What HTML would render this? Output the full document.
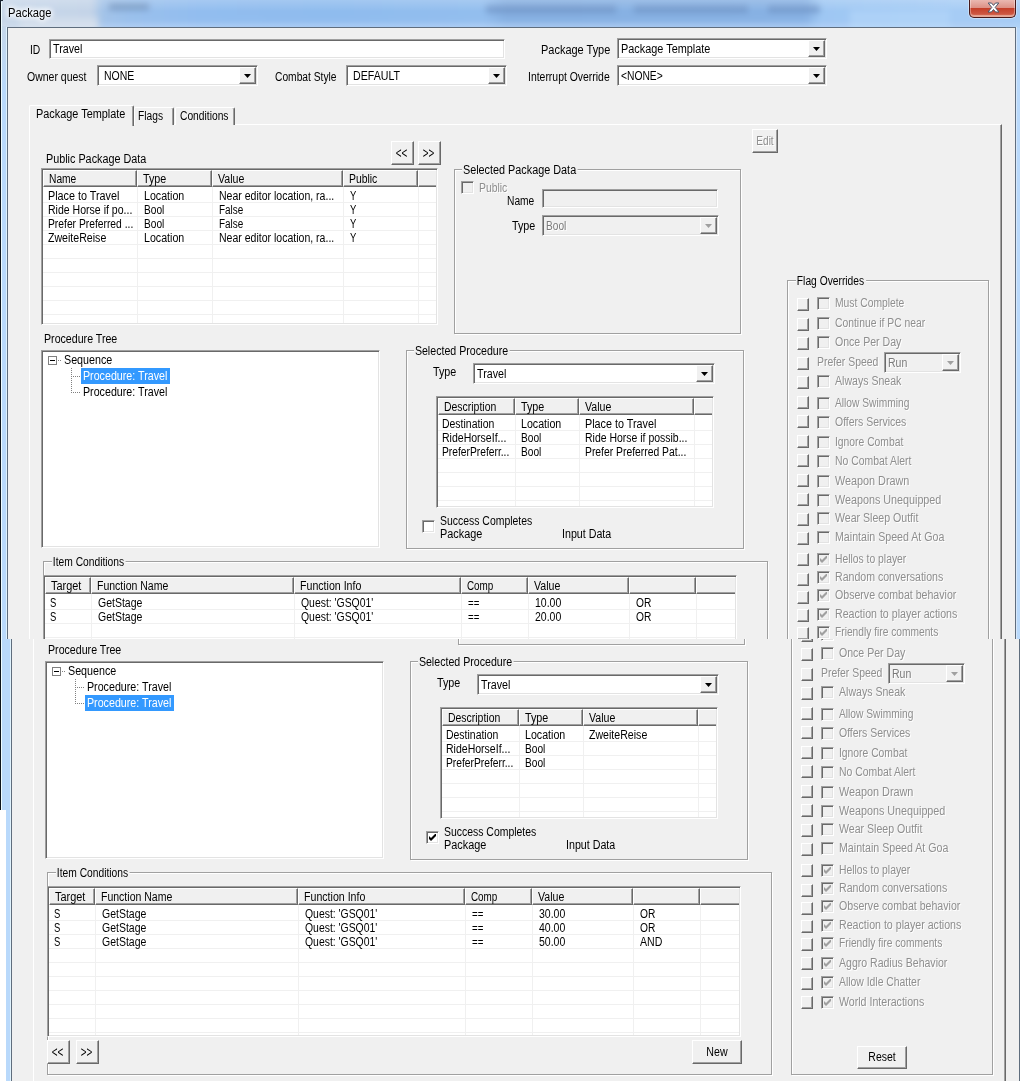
<!DOCTYPE html><html><head><meta charset="utf-8"><title>Package</title><style>
html,body{margin:0;padding:0;background:#fff;}
body{width:1020px;height:1081px;position:relative;overflow:hidden;font:11px "Liberation Sans",sans-serif;color:#000;}
div,svg{position:absolute;box-sizing:border-box;}
.t{z-index:3;white-space:nowrap;line-height:13px;height:13px;font-size:12px;transform-origin:0 0;}
.gray{color:#8e8e8e;text-shadow:1px 1px 0 #fff;}
.gl{background:#f0f0f0;padding:0 2px 0 1px;}
.bl{text-align:center;transform-origin:50% 0;}
.sunk{border:1px solid;border-color:#a0a0a0 #fff #fff #a0a0a0;box-shadow:inset 1px 1px 0 #696969,inset -1px -1px 0 #e3e3e3;}
.btn{background:#f0f0f0;border:1px solid;border-color:#fff #696969 #696969 #fff;box-shadow:inset -1px -1px 0 #a0a0a0,inset 1px 1px 0 #f0f0f0;}
.sbtn{background:#f0f0f0;border:1px solid;border-color:#fff #696969 #696969 #fff;box-shadow:inset -1px -1px 0 #a0a0a0;}
.hd{background:#f0f0f0;border:1px solid;border-color:#fff #696969 #696969 #fff;box-shadow:inset -1px -1px 0 #a0a0a0;}
.grp{border:1px solid #a0a0a0;box-shadow:1px 1px 0 #fff, inset 1px 1px 0 #fff;}
.gv{background:#f0f0f0;}
.gh{background:#f0f0f0;}
.panel{border:1px solid;border-color:#fff #696969 #696969 #fff;box-shadow:inset -1px -1px 0 #a0a0a0;background:#f0f0f0;}
.tab{background:#f0f0f0;border:1px solid;border-color:#fff #696969 transparent #fff;border-bottom:none;box-shadow:inset -1px 0 0 #a0a0a0;border-radius:2px 2px 0 0;}
.tab.act{z-index:2;}
.dots{background:repeating-linear-gradient(90deg,#808080 0 1px,transparent 1px 2px);}
.dotsv{background:repeating-linear-gradient(180deg,#808080 0 1px,transparent 1px 2px);}
.clip{overflow:hidden;}
</style></head><body><div class="clip" style="left:0;top:0;width:1020px;height:639px;"><div class="" style="left:0px;top:0px;width:1020px;height:700px;background:#b9d9fb;"></div><div style="left:0;top:0;width:1020px;height:28px;overflow:hidden;"><div style="left:0;top:0;width:1020px;height:28px;filter:blur(3px);"><div class="" style="left:-20px;top:-20px;width:1060px;height:70px;background:linear-gradient(90deg,#c9d8ea 0px,#c4d4e8 112px,#a3c3e8 122px,#9ac0ec 150px,#92bdef 220px,#8fbcee 350px,#93beee 505px,#86b0e2 525px,#88b2e4 826px,#9ec7f3 840px,#a6ccf5 980px,#a8cdf5 1060px);"></div><div class="" style="left:109px;top:3px;width:40px;height:7px;background:#7394bd;opacity:.8;"></div><div class="" style="left:20px;top:18px;width:78px;height:12px;background:#d3deec;"></div><div class="" style="left:486px;top:5px;width:130px;height:8px;background:#6f93c4;opacity:.7;"></div><div class="" style="left:634px;top:5px;width:114px;height:8px;background:#6f93c4;opacity:.7;"></div><div class="" style="left:768px;top:5px;width:52px;height:8px;background:#6f93c4;opacity:.7;"></div><div class="" style="left:100px;top:23px;width:900px;height:8px;background:#a9cbf3;opacity:.7;"></div><div class="" style="left:850px;top:10px;width:100px;height:20px;background:#b0d3f8;opacity:.8;"></div></div></div><div class="" style="left:0px;top:0px;width:1020px;height:28px;background:linear-gradient(180deg,rgba(255,255,255,.18) 0,rgba(255,255,255,0) 40%,rgba(255,255,255,0) 75%,rgba(255,255,255,.12) 100%);"></div><div class="" style="left:2px;top:26px;width:4px;height:60px;background:linear-gradient(180deg,#c6d7ea 0,#b9d9fb 100%);"></div><div class="" style="left:0px;top:3px;width:1px;height:700px;background:#0e141c;"></div><div class="" style="left:1px;top:2px;width:1px;height:700px;background:#eefcff;"></div><div class="" style="left:0px;top:0px;width:3px;height:3px;background:radial-gradient(circle at 3px 3px,transparent 2.2px,#1a2430 2.3px);"></div><div class="" style="left:1016px;top:27px;width:1px;height:700px;background:#d6e7fa;"></div><div class="" style="left:6px;top:27px;width:1px;height:700px;background:#dff2fd;"></div><div class="" style="left:7px;top:27px;width:1009px;height:700px;background:#5f6d7d;"></div><div class="t" style="left:8px;top:6px;line-height:15px;height:15px;color:#000;transform:scaleX(0.932);text-shadow:0 0 5px #fff,0 0 5px #fff,0 0 8px #fff,0 0 8px #fff;">Package</div><div class="" style="left:969px;top:0px;width:47px;height:18px;background:linear-gradient(180deg,#eab8b0 0%,#dc9084 47%,#c5402a 50%,#cc5540 80%,#dd8268 100%);border:1px solid #47191a;border-top:none;border-radius:0 0 5px 5px;box-shadow:inset 0 -1px 0 1px rgba(255,255,255,.35), 0 0 0 1px rgba(255,255,255,.35);"></div><svg class="a" style="left:987px;top:2px" width="13" height="11" viewBox="0 0 13 11"><path d="M1.200 1h3.300l2 2.400L8.500 1h3.300L8.200 5.400l3.800 4.600H8.600L6.500 7.500 4.400 10H1l3.800-4.600z" fill="#fff" stroke="#4b586c" stroke-width="1"/></svg><div class="" style="left:8px;top:28px;width:1007px;height:1400px;background:#f0f0f0;"></div><div class="t" style="left:30.0px;top:44px;transform:scaleX(0.858);">ID</div><div class="sunk" style="left:49px;top:39px;width:456px;height:20px;background:#fff;"></div><div class="t" style="left:53.0px;top:43px;transform:scaleX(0.891);">Travel</div><div class="t" style="left:27.0px;top:71px;transform:scaleX(0.875);">Owner quest</div><div class="sunk" style="left:97px;top:65px;width:161px;height:21px;background:#fff;"></div><div class="t" style="left:104.0px;top:70px;transform:scaleX(0.874);">NONE</div><div class="btn" style="left:239px;top:67px;width:17px;height:17px;"></div><svg class="a" style="left:244px;top:74px" width="7" height="4" viewBox="0 0 7 4"><path d="M0 0h7L3.5 4z" fill="#000"/></svg><div class="t" style="left:275.0px;top:71px;transform:scaleX(0.854);">Combat Style</div><div class="sunk" style="left:346px;top:65px;width:161px;height:21px;background:#fff;"></div><div class="t" style="left:353.0px;top:70px;transform:scaleX(0.885);">DEFAULT</div><div class="btn" style="left:488px;top:67px;width:17px;height:17px;"></div><svg class="a" style="left:493px;top:74px" width="7" height="4" viewBox="0 0 7 4"><path d="M0 0h7L3.5 4z" fill="#000"/></svg><div class="t" style="left:540.7px;top:44px;transform:scaleX(0.914);">Package Type</div><div class="sunk" style="left:617px;top:38px;width:210px;height:21px;background:#fff;"></div><div class="t" style="left:621.0px;top:43px;transform:scaleX(0.907);">Package Template</div><div class="btn" style="left:808px;top:40px;width:17px;height:17px;"></div><svg class="a" style="left:813px;top:47px" width="7" height="4" viewBox="0 0 7 4"><path d="M0 0h7L3.5 4z" fill="#000"/></svg><div class="t" style="left:528.3px;top:71px;transform:scaleX(0.869);">Interrupt Override</div><div class="sunk" style="left:617px;top:65px;width:210px;height:21px;background:#fff;"></div><div class="t" style="left:621.0px;top:70px;transform:scaleX(0.857);">&lt;NONE&gt;</div><div class="btn" style="left:808px;top:67px;width:17px;height:17px;"></div><svg class="a" style="left:813px;top:74px" width="7" height="4" viewBox="0 0 7 4"><path d="M0 0h7L3.5 4z" fill="#000"/></svg><div class="panel" style="left:29px;top:124px;width:973px;height:1300px;"></div><div class="tab act" style="left:29px;top:105px;width:105px;height:21px;"></div><div class="t" style="left:36.0px;top:108px;transform:scaleX(0.907);">Package Template</div><div class="tab" style="left:134px;top:107px;width:40px;height:18px;"></div><div class="t" style="left:138.0px;top:110px;transform:scaleX(0.852);">Flags</div><div class="tab" style="left:175px;top:107px;width:60px;height:18px;"></div><div class="t" style="left:180.0px;top:110px;transform:scaleX(0.855);">Conditions</div><div class="btn" style="left:752px;top:129px;width:26px;height:24px;"></div><div class="t bl gray" style="left:752px;top:129px;width:26px;height:24px;line-height:24px;transform:scaleX(0.837)">Edit</div><div class="t" style="left:46.0px;top:153px;transform:scaleX(0.900);">Public Package Data</div><div class="btn" style="left:391px;top:141px;width:23px;height:24px;"></div><div class="t bl" style="left:390px;top:141px;width:23px;height:24px;line-height:24px;font-size:15px;transform:scaleX(.66)">&lt;&lt;</div><div class="btn" style="left:418px;top:141px;width:23px;height:24px;"></div><div class="t bl" style="left:417px;top:141px;width:23px;height:24px;line-height:24px;font-size:15px;transform:scaleX(.66)">&gt;&gt;</div><div class="sunk" style="left:41px;top:168px;width:397px;height:157px;background:#fff;overflow:hidden;"></div><div class="abs" style="left:43px;top:170px;width:393px;height:153px;overflow:hidden"><div class="hd" style="left:0px;top:0px;width:94px;height:17px;"></div><div class="t" style="left:6.0px;top:3px;transform:scaleX(0.853);">Name</div><div class="hd" style="left:94px;top:0px;width:75px;height:17px;"></div><div class="t" style="left:100.0px;top:3px;transform:scaleX(0.896);">Type</div><div class="hd" style="left:169px;top:0px;width:131px;height:17px;"></div><div class="t" style="left:175.0px;top:3px;transform:scaleX(0.883);">Value</div><div class="hd" style="left:300px;top:0px;width:75px;height:17px;"></div><div class="t" style="left:306.0px;top:3px;transform:scaleX(0.866);">Public</div><div class="hd" style="left:375px;top:0px;width:22px;height:17px;"></div><div class="gv" style="left:94px;top:17px;width:1px;height:136px;"></div><div class="gv" style="left:169px;top:17px;width:1px;height:136px;"></div><div class="gv" style="left:300px;top:17px;width:1px;height:136px;"></div><div class="gv" style="left:375px;top:17px;width:1px;height:136px;"></div><div class="gh" style="left:0px;top:32px;width:393px;height:1px;"></div><div class="gh" style="left:0px;top:46px;width:393px;height:1px;"></div><div class="gh" style="left:0px;top:60px;width:393px;height:1px;"></div><div class="gh" style="left:0px;top:74px;width:393px;height:1px;"></div><div class="gh" style="left:0px;top:88px;width:393px;height:1px;"></div><div class="gh" style="left:0px;top:102px;width:393px;height:1px;"></div><div class="gh" style="left:0px;top:116px;width:393px;height:1px;"></div><div class="gh" style="left:0px;top:130px;width:393px;height:1px;"></div><div class="gh" style="left:0px;top:144px;width:393px;height:1px;"></div><div class="t" style="left:5.0px;top:20px;transform:scaleX(0.898);">Place to Travel</div><div class="t" style="left:101.0px;top:20px;transform:scaleX(0.888);">Location</div><div class="t" style="left:176.0px;top:20px;transform:scaleX(0.877);">Near editor location, ra...</div><div class="t" style="left:307.0px;top:20px;transform:scaleX(0.787);">Y</div><div class="t" style="left:5.0px;top:34px;transform:scaleX(0.878);">Ride Horse if po...</div><div class="t" style="left:101.0px;top:34px;transform:scaleX(0.845);">Bool</div><div class="t" style="left:176.0px;top:34px;transform:scaleX(0.828);">False</div><div class="t" style="left:307.0px;top:34px;transform:scaleX(0.787);">Y</div><div class="t" style="left:5.0px;top:48px;transform:scaleX(0.858);">Prefer Preferred ...</div><div class="t" style="left:101.0px;top:48px;transform:scaleX(0.845);">Bool</div><div class="t" style="left:176.0px;top:48px;transform:scaleX(0.828);">False</div><div class="t" style="left:307.0px;top:48px;transform:scaleX(0.787);">Y</div><div class="t" style="left:5.0px;top:62px;transform:scaleX(0.883);">ZweiteReise</div><div class="t" style="left:101.0px;top:62px;transform:scaleX(0.888);">Location</div><div class="t" style="left:176.0px;top:62px;transform:scaleX(0.877);">Near editor location, ra...</div><div class="t" style="left:307.0px;top:62px;transform:scaleX(0.787);">Y</div></div><div class="grp" style="left:454px;top:169px;width:287px;height:165px;"></div><div class="t gl" style="left:462.0px;top:164px;transform:scaleX(0.903);">Selected Package Data</div><div class="sunk" style="left:461px;top:181px;width:13px;height:13px;background:#f0f0f0;"></div><div class="t gray" style="left:479.0px;top:182px;transform:scaleX(0.866);">Public</div><div class="t" style="left:507.0px;top:195px;transform:scaleX(0.853);">Name</div><div class="sunk" style="left:542px;top:189px;width:176px;height:19px;background:#f0f0f0;"></div><div class="t" style="left:512.0px;top:220px;transform:scaleX(0.896);">Type</div><div class="sunk dis" style="left:542px;top:215px;width:177px;height:21px;background:#f0f0f0;"></div><div class="t gray" style="left:546.0px;top:220px;transform:scaleX(0.845);color:#7a7a7a;">Bool</div><div class="btn" style="left:700px;top:217px;width:17px;height:17px;"></div><svg class="a" style="left:705px;top:224px" width="7" height="4" viewBox="0 0 7 4"><path d="M0 0h7L3.5 4z" fill="#a0a0a0"/></svg><div class="t" style="left:44.0px;top:333px;transform:scaleX(0.886);">Procedure Tree</div><div class="sunk" style="left:41px;top:350px;width:339px;height:198px;background:#fff;"></div><div class="" style="left:48px;top:356px;width:9px;height:9px;border:1px solid #808080;background:#fff;"></div><div class="" style="left:50px;top:360px;width:5px;height:1px;background:#000;"></div><div class="dots" style="left:58px;top:360px;width:4px;height:1px;"></div><div class="t" style="left:64.0px;top:354px;transform:scaleX(0.894);">Sequence</div><div class="dotsv" style="left:71px;top:368px;width:1px;height:25px;"></div><div class="dots" style="left:71px;top:376px;width:9px;height:1px;"></div><div class="dots" style="left:71px;top:392px;width:9px;height:1px;"></div><div class="" style="left:81px;top:368px;width:89px;height:16px;background:#3399ff;"></div><div class="t" style="left:83.0px;top:370px;transform:scaleX(0.890);color:#fff;">Procedure: Travel</div><div class="t" style="left:83.0px;top:386px;transform:scaleX(0.890);">Procedure: Travel</div><div class="grp" style="left:406px;top:350px;width:338px;height:199px;"></div><div class="t gl" style="left:414.0px;top:345px;transform:scaleX(0.885);">Selected Procedure</div><div class="t" style="left:433.0px;top:366px;transform:scaleX(0.896);">Type</div><div class="sunk" style="left:473px;top:363px;width:242px;height:21px;background:#fff;"></div><div class="t" style="left:477.0px;top:368px;transform:scaleX(0.891);">Travel</div><div class="btn" style="left:696px;top:365px;width:17px;height:17px;"></div><svg class="a" style="left:701px;top:372px" width="7" height="4" viewBox="0 0 7 4"><path d="M0 0h7L3.5 4z" fill="#000"/></svg><div class="sunk" style="left:436px;top:396px;width:278px;height:112px;background:#fff;overflow:hidden;"></div><div class="abs" style="left:438px;top:398px;width:274px;height:108px;overflow:hidden"><div class="hd" style="left:0px;top:0px;width:77px;height:17px;"></div><div class="t" style="left:6.0px;top:3px;transform:scaleX(0.871);">Description</div><div class="hd" style="left:77px;top:0px;width:64px;height:17px;"></div><div class="t" style="left:83.0px;top:3px;transform:scaleX(0.896);">Type</div><div class="hd" style="left:141px;top:0px;width:115px;height:17px;"></div><div class="t" style="left:147.0px;top:3px;transform:scaleX(0.883);">Value</div><div class="hd" style="left:256px;top:0px;width:22px;height:17px;"></div><div class="gv" style="left:77px;top:17px;width:1px;height:91px;"></div><div class="gv" style="left:141px;top:17px;width:1px;height:91px;"></div><div class="gv" style="left:256px;top:17px;width:1px;height:91px;"></div><div class="gh" style="left:0px;top:32px;width:274px;height:1px;"></div><div class="gh" style="left:0px;top:46px;width:274px;height:1px;"></div><div class="gh" style="left:0px;top:60px;width:274px;height:1px;"></div><div class="gh" style="left:0px;top:74px;width:274px;height:1px;"></div><div class="gh" style="left:0px;top:88px;width:274px;height:1px;"></div><div class="gh" style="left:0px;top:102px;width:274px;height:1px;"></div><div class="t" style="left:4.0px;top:20px;transform:scaleX(0.871);">Destination</div><div class="t" style="left:83.0px;top:20px;transform:scaleX(0.888);">Location</div><div class="t" style="left:147.0px;top:20px;transform:scaleX(0.898);">Place to Travel</div><div class="t" style="left:4.0px;top:34px;transform:scaleX(0.877);">RideHorseIf...</div><div class="t" style="left:83.0px;top:34px;transform:scaleX(0.845);">Bool</div><div class="t" style="left:147.0px;top:34px;transform:scaleX(0.872);">Ride Horse if possib...</div><div class="t" style="left:4.0px;top:48px;transform:scaleX(0.855);">PreferPreferr...</div><div class="t" style="left:83.0px;top:48px;transform:scaleX(0.845);">Bool</div><div class="t" style="left:147.0px;top:48px;transform:scaleX(0.863);">Prefer Preferred Pat...</div></div><div class="sunk" style="left:422px;top:520px;width:13px;height:13px;background:#fff;"></div><div class="t" style="left:440.0px;top:515px;transform:scaleX(0.870);">Success Completes</div><div class="t" style="left:440.0px;top:528px;transform:scaleX(0.906);">Package</div><div class="t" style="left:562.0px;top:528px;transform:scaleX(0.890);">Input Data</div><div class="grp" style="left:43px;top:561px;width:725px;height:203px;"></div><div class="t gl" style="left:52.0px;top:556px;transform:scaleX(0.855);">Item Conditions</div><div class="sunk" style="left:43px;top:575px;width:694px;height:151px;background:#fff;overflow:hidden;"></div><div class="abs" style="left:45px;top:577px;width:690px;height:147px;overflow:hidden"><div class="hd" style="left:0px;top:0px;width:46px;height:17px;"></div><div class="t" style="left:6.0px;top:3px;transform:scaleX(0.909);">Target</div><div class="hd" style="left:46px;top:0px;width:203px;height:17px;"></div><div class="t" style="left:52.0px;top:3px;transform:scaleX(0.876);">Function Name</div><div class="hd" style="left:249px;top:0px;width:167px;height:17px;"></div><div class="t" style="left:255.0px;top:3px;transform:scaleX(0.884);">Function Info</div><div class="hd" style="left:416px;top:0px;width:67px;height:17px;"></div><div class="t" style="left:422.0px;top:3px;transform:scaleX(0.822);">Comp</div><div class="hd" style="left:483px;top:0px;width:101px;height:17px;"></div><div class="t" style="left:489.0px;top:3px;transform:scaleX(0.883);">Value</div><div class="hd" style="left:584px;top:0px;width:67px;height:17px;"></div><div class="t" style="left:590.0px;top:3px;transform:scaleX(0.875);"></div><div class="hd" style="left:651px;top:0px;width:43px;height:17px;"></div><div class="gv" style="left:46px;top:17px;width:1px;height:130px;"></div><div class="gv" style="left:249px;top:17px;width:1px;height:130px;"></div><div class="gv" style="left:416px;top:17px;width:1px;height:130px;"></div><div class="gv" style="left:483px;top:17px;width:1px;height:130px;"></div><div class="gv" style="left:584px;top:17px;width:1px;height:130px;"></div><div class="gv" style="left:651px;top:17px;width:1px;height:130px;"></div><div class="gh" style="left:0px;top:32px;width:690px;height:1px;"></div><div class="gh" style="left:0px;top:46px;width:690px;height:1px;"></div><div class="gh" style="left:0px;top:60px;width:690px;height:1px;"></div><div class="gh" style="left:0px;top:74px;width:690px;height:1px;"></div><div class="gh" style="left:0px;top:88px;width:690px;height:1px;"></div><div class="gh" style="left:0px;top:102px;width:690px;height:1px;"></div><div class="gh" style="left:0px;top:116px;width:690px;height:1px;"></div><div class="gh" style="left:0px;top:130px;width:690px;height:1px;"></div><div class="gh" style="left:0px;top:144px;width:690px;height:1px;"></div><div class="t" style="left:5.0px;top:20px;transform:scaleX(0.787);">S</div><div class="t" style="left:53.0px;top:20px;transform:scaleX(0.874);">GetStage</div><div class="t" style="left:256.0px;top:20px;transform:scaleX(0.868);">Quest: 'GSQ01'</div><div class="t" style="left:423.0px;top:20px;transform:scaleX(0.806);">==</div><div class="t" style="left:490.0px;top:20px;transform:scaleX(0.876);">10.00</div><div class="t" style="left:591.0px;top:20px;transform:scaleX(0.850);">OR</div><div class="t" style="left:5.0px;top:34px;transform:scaleX(0.787);">S</div><div class="t" style="left:53.0px;top:34px;transform:scaleX(0.874);">GetStage</div><div class="t" style="left:256.0px;top:34px;transform:scaleX(0.868);">Quest: 'GSQ01'</div><div class="t" style="left:423.0px;top:34px;transform:scaleX(0.806);">==</div><div class="t" style="left:490.0px;top:34px;transform:scaleX(0.876);">20.00</div><div class="t" style="left:591.0px;top:34px;transform:scaleX(0.850);">OR</div></div><div class="grp" style="left:787px;top:280px;width:202px;height:484px;"></div><div class="t gl" style="left:796.0px;top:275px;transform:scaleX(0.855);">Flag Overrides</div><div class="sbtn" style="left:797px;top:298px;width:12px;height:13px;"></div><div class="sunk" style="left:817px;top:297px;width:13px;height:13px;background:#f0f0f0;"></div><div class="t gray" style="left:835.0px;top:297px;transform:scaleX(0.859);">Must Complete</div><div class="sbtn" style="left:797px;top:318px;width:12px;height:13px;"></div><div class="sunk" style="left:817px;top:317px;width:13px;height:13px;background:#f0f0f0;"></div><div class="t gray" style="left:835.0px;top:317px;transform:scaleX(0.862);">Continue if PC near</div><div class="sbtn" style="left:797px;top:337px;width:12px;height:13px;"></div><div class="sunk" style="left:817px;top:336px;width:13px;height:13px;background:#f0f0f0;"></div><div class="t gray" style="left:835.0px;top:336px;transform:scaleX(0.880);">Once Per Day</div><div class="sbtn" style="left:797px;top:357px;width:12px;height:13px;"></div><div class="t gray" style="left:817.0px;top:356px;transform:scaleX(0.867);">Prefer Speed</div><div class="sunk dis" style="left:884px;top:352px;width:77px;height:21px;background:#f0f0f0;"></div><div class="t gray" style="left:888.0px;top:357px;transform:scaleX(0.877);color:#7a7a7a;">Run</div><div class="btn" style="left:942px;top:354px;width:17px;height:17px;"></div><svg class="a" style="left:947px;top:361px" width="7" height="4" viewBox="0 0 7 4"><path d="M0 0h7L3.5 4z" fill="#a0a0a0"/></svg><div class="sbtn" style="left:797px;top:376px;width:12px;height:13px;"></div><div class="sunk" style="left:817px;top:375px;width:13px;height:13px;background:#f0f0f0;"></div><div class="t gray" style="left:835.0px;top:375px;transform:scaleX(0.880);">Always Sneak</div><div class="sbtn" style="left:797px;top:396px;width:12px;height:13px;"></div><div class="sunk" style="left:817px;top:397px;width:13px;height:13px;background:#f0f0f0;"></div><div class="t gray" style="left:835.0px;top:397px;transform:scaleX(0.851);">Allow Swimming</div><div class="sbtn" style="left:797px;top:415px;width:12px;height:13px;"></div><div class="sunk" style="left:817px;top:416px;width:13px;height:13px;background:#f0f0f0;"></div><div class="t gray" style="left:835.0px;top:416px;transform:scaleX(0.872);">Offers Services</div><div class="sbtn" style="left:797px;top:435px;width:12px;height:13px;"></div><div class="sunk" style="left:817px;top:436px;width:13px;height:13px;background:#f0f0f0;"></div><div class="t gray" style="left:835.0px;top:436px;transform:scaleX(0.860);">Ignore Combat</div><div class="sbtn" style="left:797px;top:454px;width:12px;height:13px;"></div><div class="sunk" style="left:817px;top:455px;width:13px;height:13px;background:#f0f0f0;"></div><div class="t gray" style="left:835.0px;top:455px;transform:scaleX(0.867);">No Combat Alert</div><div class="sbtn" style="left:797px;top:474px;width:12px;height:13px;"></div><div class="sunk" style="left:817px;top:475px;width:13px;height:13px;background:#f0f0f0;"></div><div class="t gray" style="left:835.0px;top:475px;transform:scaleX(0.901);">Weapon Drawn</div><div class="sbtn" style="left:797px;top:493px;width:12px;height:13px;"></div><div class="sunk" style="left:817px;top:494px;width:13px;height:13px;background:#f0f0f0;"></div><div class="t gray" style="left:835.0px;top:494px;transform:scaleX(0.897);">Weapons Unequipped</div><div class="sbtn" style="left:797px;top:513px;width:12px;height:13px;"></div><div class="sunk" style="left:817px;top:512px;width:13px;height:13px;background:#f0f0f0;"></div><div class="t gray" style="left:835.0px;top:512px;transform:scaleX(0.882);">Wear Sleep Outfit</div><div class="sbtn" style="left:797px;top:532px;width:12px;height:13px;"></div><div class="sunk" style="left:817px;top:531px;width:13px;height:13px;background:#f0f0f0;"></div><div class="t gray" style="left:835.0px;top:531px;transform:scaleX(0.886);">Maintain Speed At Goa</div><div class="sbtn" style="left:797px;top:553px;width:12px;height:13px;"></div><div class="sunk" style="left:817px;top:553px;width:13px;height:13px;background:#f0f0f0;"></div><svg class="a" style="left:820px;top:556px" width="7" height="7" viewBox="0 0 7 7"><path d="M0 2v3l2 2l5-5v-3l-5 5z" fill="#a0a0a0"/></svg><div class="t gray" style="left:835.0px;top:553px;transform:scaleX(0.862);">Hellos to player</div><div class="sbtn" style="left:797px;top:573px;width:12px;height:13px;"></div><div class="sunk" style="left:817px;top:571px;width:13px;height:13px;background:#f0f0f0;"></div><svg class="a" style="left:820px;top:574px" width="7" height="7" viewBox="0 0 7 7"><path d="M0 2v3l2 2l5-5v-3l-5 5z" fill="#a0a0a0"/></svg><div class="t gray" style="left:835.0px;top:571px;transform:scaleX(0.882);">Random conversations</div><div class="sbtn" style="left:797px;top:591px;width:12px;height:13px;"></div><div class="sunk" style="left:817px;top:589px;width:13px;height:13px;background:#f0f0f0;"></div><svg class="a" style="left:820px;top:592px" width="7" height="7" viewBox="0 0 7 7"><path d="M0 2v3l2 2l5-5v-3l-5 5z" fill="#a0a0a0"/></svg><div class="t gray" style="left:835.0px;top:589px;transform:scaleX(0.883);">Observe combat behavior</div><div class="sbtn" style="left:797px;top:609px;width:12px;height:13px;"></div><div class="sunk" style="left:817px;top:608px;width:13px;height:13px;background:#f0f0f0;"></div><svg class="a" style="left:820px;top:611px" width="7" height="7" viewBox="0 0 7 7"><path d="M0 2v3l2 2l5-5v-3l-5 5z" fill="#a0a0a0"/></svg><div class="t gray" style="left:835.0px;top:608px;transform:scaleX(0.886);">Reaction to player actions</div><div class="sbtn" style="left:797px;top:627px;width:12px;height:13px;"></div><div class="sunk" style="left:817px;top:626px;width:13px;height:13px;background:#f0f0f0;"></div><svg class="a" style="left:820px;top:629px" width="7" height="7" viewBox="0 0 7 7"><path d="M0 2v3l2 2l5-5v-3l-5 5z" fill="#a0a0a0"/></svg><div class="t gray" style="left:835.0px;top:626px;transform:scaleX(0.851);">Friendly fire comments</div></div><div class="clip" style="left:0;top:639px;width:1020px;height:442px;"><div style="left:4px;top:-328px;width:1020px;height:1500px;"><div class="" style="left:-4px;top:0px;width:1030px;height:1500px;background:#b9d9fb;"></div><div class="" style="left:-4px;top:0px;width:1px;height:499px;background:#0e141c;"></div><div class="" style="left:-3px;top:0px;width:1px;height:1500px;background:#eefcff;"></div><div class="" style="left:-4px;top:499px;width:6px;height:1000px;background:#fff;"></div><div class="" style="left:6px;top:27px;width:1px;height:1500px;background:#dff2fd;"></div><div class="" style="left:7px;top:27px;width:1009px;height:1500px;background:#5f6d7d;"></div><div class="" style="left:8px;top:28px;width:1007px;height:1400px;background:#f0f0f0;"></div><div class="panel" style="left:29px;top:124px;width:973px;height:1300px;"></div><div class="grp" style="left:454px;top:169px;width:287px;height:165px;"></div><div class="t" style="left:44.0px;top:333px;transform:scaleX(0.886);">Procedure Tree</div><div class="sunk" style="left:41px;top:350px;width:339px;height:198px;background:#fff;"></div><div class="" style="left:48px;top:356px;width:9px;height:9px;border:1px solid #808080;background:#fff;"></div><div class="" style="left:50px;top:360px;width:5px;height:1px;background:#000;"></div><div class="dots" style="left:58px;top:360px;width:4px;height:1px;"></div><div class="t" style="left:64.0px;top:354px;transform:scaleX(0.894);">Sequence</div><div class="dotsv" style="left:71px;top:368px;width:1px;height:25px;"></div><div class="dots" style="left:71px;top:376px;width:9px;height:1px;"></div><div class="dots" style="left:71px;top:392px;width:9px;height:1px;"></div><div class="t" style="left:83.0px;top:370px;transform:scaleX(0.890);">Procedure: Travel</div><div class="" style="left:81px;top:384px;width:89px;height:16px;background:#3399ff;"></div><div class="t" style="left:83.0px;top:386px;transform:scaleX(0.890);color:#fff;">Procedure: Travel</div><div class="grp" style="left:406px;top:350px;width:338px;height:199px;"></div><div class="t gl" style="left:414.0px;top:345px;transform:scaleX(0.885);">Selected Procedure</div><div class="t" style="left:433.0px;top:366px;transform:scaleX(0.896);">Type</div><div class="sunk" style="left:473px;top:363px;width:242px;height:21px;background:#fff;"></div><div class="t" style="left:477.0px;top:368px;transform:scaleX(0.891);">Travel</div><div class="btn" style="left:696px;top:365px;width:17px;height:17px;"></div><svg class="a" style="left:701px;top:372px" width="7" height="4" viewBox="0 0 7 4"><path d="M0 0h7L3.5 4z" fill="#000"/></svg><div class="sunk" style="left:436px;top:396px;width:278px;height:112px;background:#fff;overflow:hidden;"></div><div class="abs" style="left:438px;top:398px;width:274px;height:108px;overflow:hidden"><div class="hd" style="left:0px;top:0px;width:77px;height:17px;"></div><div class="t" style="left:6.0px;top:3px;transform:scaleX(0.871);">Description</div><div class="hd" style="left:77px;top:0px;width:64px;height:17px;"></div><div class="t" style="left:83.0px;top:3px;transform:scaleX(0.896);">Type</div><div class="hd" style="left:141px;top:0px;width:115px;height:17px;"></div><div class="t" style="left:147.0px;top:3px;transform:scaleX(0.883);">Value</div><div class="hd" style="left:256px;top:0px;width:22px;height:17px;"></div><div class="gv" style="left:77px;top:17px;width:1px;height:91px;"></div><div class="gv" style="left:141px;top:17px;width:1px;height:91px;"></div><div class="gv" style="left:256px;top:17px;width:1px;height:91px;"></div><div class="gh" style="left:0px;top:32px;width:274px;height:1px;"></div><div class="gh" style="left:0px;top:46px;width:274px;height:1px;"></div><div class="gh" style="left:0px;top:60px;width:274px;height:1px;"></div><div class="gh" style="left:0px;top:74px;width:274px;height:1px;"></div><div class="gh" style="left:0px;top:88px;width:274px;height:1px;"></div><div class="gh" style="left:0px;top:102px;width:274px;height:1px;"></div><div class="t" style="left:4.0px;top:20px;transform:scaleX(0.871);">Destination</div><div class="t" style="left:83.0px;top:20px;transform:scaleX(0.888);">Location</div><div class="t" style="left:147.0px;top:20px;transform:scaleX(0.883);">ZweiteReise</div><div class="t" style="left:4.0px;top:34px;transform:scaleX(0.877);">RideHorseIf...</div><div class="t" style="left:83.0px;top:34px;transform:scaleX(0.845);">Bool</div><div class="t" style="left:4.0px;top:48px;transform:scaleX(0.855);">PreferPreferr...</div><div class="t" style="left:83.0px;top:48px;transform:scaleX(0.845);">Bool</div></div><div class="sunk" style="left:422px;top:520px;width:13px;height:13px;background:#fff;"></div><svg class="a" style="left:425px;top:523px" width="7" height="7" viewBox="0 0 7 7"><path d="M0 2v3l2 2l5-5v-3l-5 5z" fill="#000"/></svg><div class="t" style="left:440.0px;top:515px;transform:scaleX(0.870);">Success Completes</div><div class="t" style="left:440.0px;top:528px;transform:scaleX(0.906);">Package</div><div class="t" style="left:562.0px;top:528px;transform:scaleX(0.890);">Input Data</div><div class="grp" style="left:43px;top:561px;width:725px;height:203px;"></div><div class="t gl" style="left:52.0px;top:556px;transform:scaleX(0.855);">Item Conditions</div><div class="sunk" style="left:43px;top:575px;width:694px;height:151px;background:#fff;overflow:hidden;"></div><div class="abs" style="left:45px;top:577px;width:690px;height:147px;overflow:hidden"><div class="hd" style="left:0px;top:0px;width:46px;height:17px;"></div><div class="t" style="left:6.0px;top:3px;transform:scaleX(0.909);">Target</div><div class="hd" style="left:46px;top:0px;width:203px;height:17px;"></div><div class="t" style="left:52.0px;top:3px;transform:scaleX(0.876);">Function Name</div><div class="hd" style="left:249px;top:0px;width:167px;height:17px;"></div><div class="t" style="left:255.0px;top:3px;transform:scaleX(0.884);">Function Info</div><div class="hd" style="left:416px;top:0px;width:67px;height:17px;"></div><div class="t" style="left:422.0px;top:3px;transform:scaleX(0.822);">Comp</div><div class="hd" style="left:483px;top:0px;width:101px;height:17px;"></div><div class="t" style="left:489.0px;top:3px;transform:scaleX(0.883);">Value</div><div class="hd" style="left:584px;top:0px;width:67px;height:17px;"></div><div class="t" style="left:590.0px;top:3px;transform:scaleX(0.875);"></div><div class="hd" style="left:651px;top:0px;width:43px;height:17px;"></div><div class="gv" style="left:46px;top:17px;width:1px;height:130px;"></div><div class="gv" style="left:249px;top:17px;width:1px;height:130px;"></div><div class="gv" style="left:416px;top:17px;width:1px;height:130px;"></div><div class="gv" style="left:483px;top:17px;width:1px;height:130px;"></div><div class="gv" style="left:584px;top:17px;width:1px;height:130px;"></div><div class="gv" style="left:651px;top:17px;width:1px;height:130px;"></div><div class="gh" style="left:0px;top:32px;width:690px;height:1px;"></div><div class="gh" style="left:0px;top:46px;width:690px;height:1px;"></div><div class="gh" style="left:0px;top:60px;width:690px;height:1px;"></div><div class="gh" style="left:0px;top:74px;width:690px;height:1px;"></div><div class="gh" style="left:0px;top:88px;width:690px;height:1px;"></div><div class="gh" style="left:0px;top:102px;width:690px;height:1px;"></div><div class="gh" style="left:0px;top:116px;width:690px;height:1px;"></div><div class="gh" style="left:0px;top:130px;width:690px;height:1px;"></div><div class="gh" style="left:0px;top:144px;width:690px;height:1px;"></div><div class="t" style="left:5.0px;top:20px;transform:scaleX(0.787);">S</div><div class="t" style="left:53.0px;top:20px;transform:scaleX(0.874);">GetStage</div><div class="t" style="left:256.0px;top:20px;transform:scaleX(0.868);">Quest: 'GSQ01'</div><div class="t" style="left:423.0px;top:20px;transform:scaleX(0.806);">==</div><div class="t" style="left:490.0px;top:20px;transform:scaleX(0.876);">30.00</div><div class="t" style="left:591.0px;top:20px;transform:scaleX(0.850);">OR</div><div class="t" style="left:5.0px;top:34px;transform:scaleX(0.787);">S</div><div class="t" style="left:53.0px;top:34px;transform:scaleX(0.874);">GetStage</div><div class="t" style="left:256.0px;top:34px;transform:scaleX(0.868);">Quest: 'GSQ01'</div><div class="t" style="left:423.0px;top:34px;transform:scaleX(0.806);">==</div><div class="t" style="left:490.0px;top:34px;transform:scaleX(0.876);">40.00</div><div class="t" style="left:591.0px;top:34px;transform:scaleX(0.850);">OR</div><div class="t" style="left:5.0px;top:48px;transform:scaleX(0.787);">S</div><div class="t" style="left:53.0px;top:48px;transform:scaleX(0.874);">GetStage</div><div class="t" style="left:256.0px;top:48px;transform:scaleX(0.868);">Quest: 'GSQ01'</div><div class="t" style="left:423.0px;top:48px;transform:scaleX(0.806);">==</div><div class="t" style="left:490.0px;top:48px;transform:scaleX(0.876);">50.00</div><div class="t" style="left:591.0px;top:48px;transform:scaleX(0.880);">AND</div></div><div class="btn" style="left:43px;top:729px;width:23px;height:24px;"></div><div class="t bl" style="left:42px;top:729px;width:23px;height:24px;line-height:24px;font-size:15px;transform:scaleX(.66)">&lt;&lt;</div><div class="btn" style="left:72px;top:729px;width:23px;height:24px;"></div><div class="t bl" style="left:71px;top:729px;width:23px;height:24px;line-height:24px;font-size:15px;transform:scaleX(.66)">&gt;&gt;</div><div class="btn" style="left:688px;top:729px;width:50px;height:24px;"></div><div class="t bl" style="left:688px;top:729px;width:50px;height:24px;line-height:24px;transform:scaleX(0.887)">New</div><div class="grp" style="left:787px;top:280px;width:202px;height:484px;"></div><div class="sbtn" style="left:797px;top:318px;width:12px;height:13px;"></div><div class="sunk" style="left:817px;top:317px;width:13px;height:13px;background:#f0f0f0;"></div><div class="t gray" style="left:835.0px;top:317px;transform:scaleX(0.862);">Continue if PC near</div><div class="sbtn" style="left:797px;top:337px;width:12px;height:13px;"></div><div class="sunk" style="left:817px;top:336px;width:13px;height:13px;background:#f0f0f0;"></div><div class="t gray" style="left:835.0px;top:336px;transform:scaleX(0.880);">Once Per Day</div><div class="sbtn" style="left:797px;top:357px;width:12px;height:13px;"></div><div class="t gray" style="left:817.0px;top:356px;transform:scaleX(0.867);">Prefer Speed</div><div class="sunk dis" style="left:884px;top:352px;width:77px;height:21px;background:#f0f0f0;"></div><div class="t gray" style="left:888.0px;top:357px;transform:scaleX(0.877);color:#7a7a7a;">Run</div><div class="btn" style="left:942px;top:354px;width:17px;height:17px;"></div><svg class="a" style="left:947px;top:361px" width="7" height="4" viewBox="0 0 7 4"><path d="M0 0h7L3.5 4z" fill="#a0a0a0"/></svg><div class="sbtn" style="left:797px;top:376px;width:12px;height:13px;"></div><div class="sunk" style="left:817px;top:375px;width:13px;height:13px;background:#f0f0f0;"></div><div class="t gray" style="left:835.0px;top:375px;transform:scaleX(0.880);">Always Sneak</div><div class="sbtn" style="left:797px;top:396px;width:12px;height:13px;"></div><div class="sunk" style="left:817px;top:397px;width:13px;height:13px;background:#f0f0f0;"></div><div class="t gray" style="left:835.0px;top:397px;transform:scaleX(0.851);">Allow Swimming</div><div class="sbtn" style="left:797px;top:415px;width:12px;height:13px;"></div><div class="sunk" style="left:817px;top:416px;width:13px;height:13px;background:#f0f0f0;"></div><div class="t gray" style="left:835.0px;top:416px;transform:scaleX(0.872);">Offers Services</div><div class="sbtn" style="left:797px;top:435px;width:12px;height:13px;"></div><div class="sunk" style="left:817px;top:436px;width:13px;height:13px;background:#f0f0f0;"></div><div class="t gray" style="left:835.0px;top:436px;transform:scaleX(0.860);">Ignore Combat</div><div class="sbtn" style="left:797px;top:454px;width:12px;height:13px;"></div><div class="sunk" style="left:817px;top:455px;width:13px;height:13px;background:#f0f0f0;"></div><div class="t gray" style="left:835.0px;top:455px;transform:scaleX(0.867);">No Combat Alert</div><div class="sbtn" style="left:797px;top:474px;width:12px;height:13px;"></div><div class="sunk" style="left:817px;top:475px;width:13px;height:13px;background:#f0f0f0;"></div><div class="t gray" style="left:835.0px;top:475px;transform:scaleX(0.901);">Weapon Drawn</div><div class="sbtn" style="left:797px;top:493px;width:12px;height:13px;"></div><div class="sunk" style="left:817px;top:494px;width:13px;height:13px;background:#f0f0f0;"></div><div class="t gray" style="left:835.0px;top:494px;transform:scaleX(0.897);">Weapons Unequipped</div><div class="sbtn" style="left:797px;top:513px;width:12px;height:13px;"></div><div class="sunk" style="left:817px;top:512px;width:13px;height:13px;background:#f0f0f0;"></div><div class="t gray" style="left:835.0px;top:512px;transform:scaleX(0.882);">Wear Sleep Outfit</div><div class="sbtn" style="left:797px;top:532px;width:12px;height:13px;"></div><div class="sunk" style="left:817px;top:531px;width:13px;height:13px;background:#f0f0f0;"></div><div class="t gray" style="left:835.0px;top:531px;transform:scaleX(0.886);">Maintain Speed At Goa</div><div class="sbtn" style="left:797px;top:553px;width:12px;height:13px;"></div><div class="sunk" style="left:817px;top:553px;width:13px;height:13px;background:#f0f0f0;"></div><svg class="a" style="left:820px;top:556px" width="7" height="7" viewBox="0 0 7 7"><path d="M0 2v3l2 2l5-5v-3l-5 5z" fill="#a0a0a0"/></svg><div class="t gray" style="left:835.0px;top:553px;transform:scaleX(0.862);">Hellos to player</div><div class="sbtn" style="left:797px;top:573px;width:12px;height:13px;"></div><div class="sunk" style="left:817px;top:571px;width:13px;height:13px;background:#f0f0f0;"></div><svg class="a" style="left:820px;top:574px" width="7" height="7" viewBox="0 0 7 7"><path d="M0 2v3l2 2l5-5v-3l-5 5z" fill="#a0a0a0"/></svg><div class="t gray" style="left:835.0px;top:571px;transform:scaleX(0.882);">Random conversations</div><div class="sbtn" style="left:797px;top:591px;width:12px;height:13px;"></div><div class="sunk" style="left:817px;top:589px;width:13px;height:13px;background:#f0f0f0;"></div><svg class="a" style="left:820px;top:592px" width="7" height="7" viewBox="0 0 7 7"><path d="M0 2v3l2 2l5-5v-3l-5 5z" fill="#a0a0a0"/></svg><div class="t gray" style="left:835.0px;top:589px;transform:scaleX(0.883);">Observe combat behavior</div><div class="sbtn" style="left:797px;top:609px;width:12px;height:13px;"></div><div class="sunk" style="left:817px;top:608px;width:13px;height:13px;background:#f0f0f0;"></div><svg class="a" style="left:820px;top:611px" width="7" height="7" viewBox="0 0 7 7"><path d="M0 2v3l2 2l5-5v-3l-5 5z" fill="#a0a0a0"/></svg><div class="t gray" style="left:835.0px;top:608px;transform:scaleX(0.886);">Reaction to player actions</div><div class="sbtn" style="left:797px;top:627px;width:12px;height:13px;"></div><div class="sunk" style="left:817px;top:626px;width:13px;height:13px;background:#f0f0f0;"></div><svg class="a" style="left:820px;top:629px" width="7" height="7" viewBox="0 0 7 7"><path d="M0 2v3l2 2l5-5v-3l-5 5z" fill="#a0a0a0"/></svg><div class="t gray" style="left:835.0px;top:626px;transform:scaleX(0.851);">Friendly fire comments</div><div class="sbtn" style="left:797px;top:646px;width:12px;height:13px;"></div><div class="sunk" style="left:817px;top:646px;width:13px;height:13px;background:#f0f0f0;"></div><svg class="a" style="left:820px;top:649px" width="7" height="7" viewBox="0 0 7 7"><path d="M0 2v3l2 2l5-5v-3l-5 5z" fill="#a0a0a0"/></svg><div class="t gray" style="left:835.0px;top:646px;transform:scaleX(0.878);">Aggro Radius Behavior</div><div class="sbtn" style="left:797px;top:666px;width:12px;height:13px;"></div><div class="sunk" style="left:817px;top:665px;width:13px;height:13px;background:#f0f0f0;"></div><svg class="a" style="left:820px;top:668px" width="7" height="7" viewBox="0 0 7 7"><path d="M0 2v3l2 2l5-5v-3l-5 5z" fill="#a0a0a0"/></svg><div class="t gray" style="left:835.0px;top:665px;transform:scaleX(0.865);">Allow Idle Chatter</div><div class="sbtn" style="left:797px;top:685px;width:12px;height:13px;"></div><div class="sunk" style="left:817px;top:685px;width:13px;height:13px;background:#f0f0f0;"></div><svg class="a" style="left:820px;top:688px" width="7" height="7" viewBox="0 0 7 7"><path d="M0 2v3l2 2l5-5v-3l-5 5z" fill="#a0a0a0"/></svg><div class="t gray" style="left:835.0px;top:685px;transform:scaleX(0.884);">World Interactions</div><div class="btn" style="left:853px;top:735px;width:50px;height:23px;"></div><div class="t bl" style="left:853px;top:735px;width:50px;height:23px;line-height:23px;transform:scaleX(0.871)">Reset</div></div></div></body></html>
